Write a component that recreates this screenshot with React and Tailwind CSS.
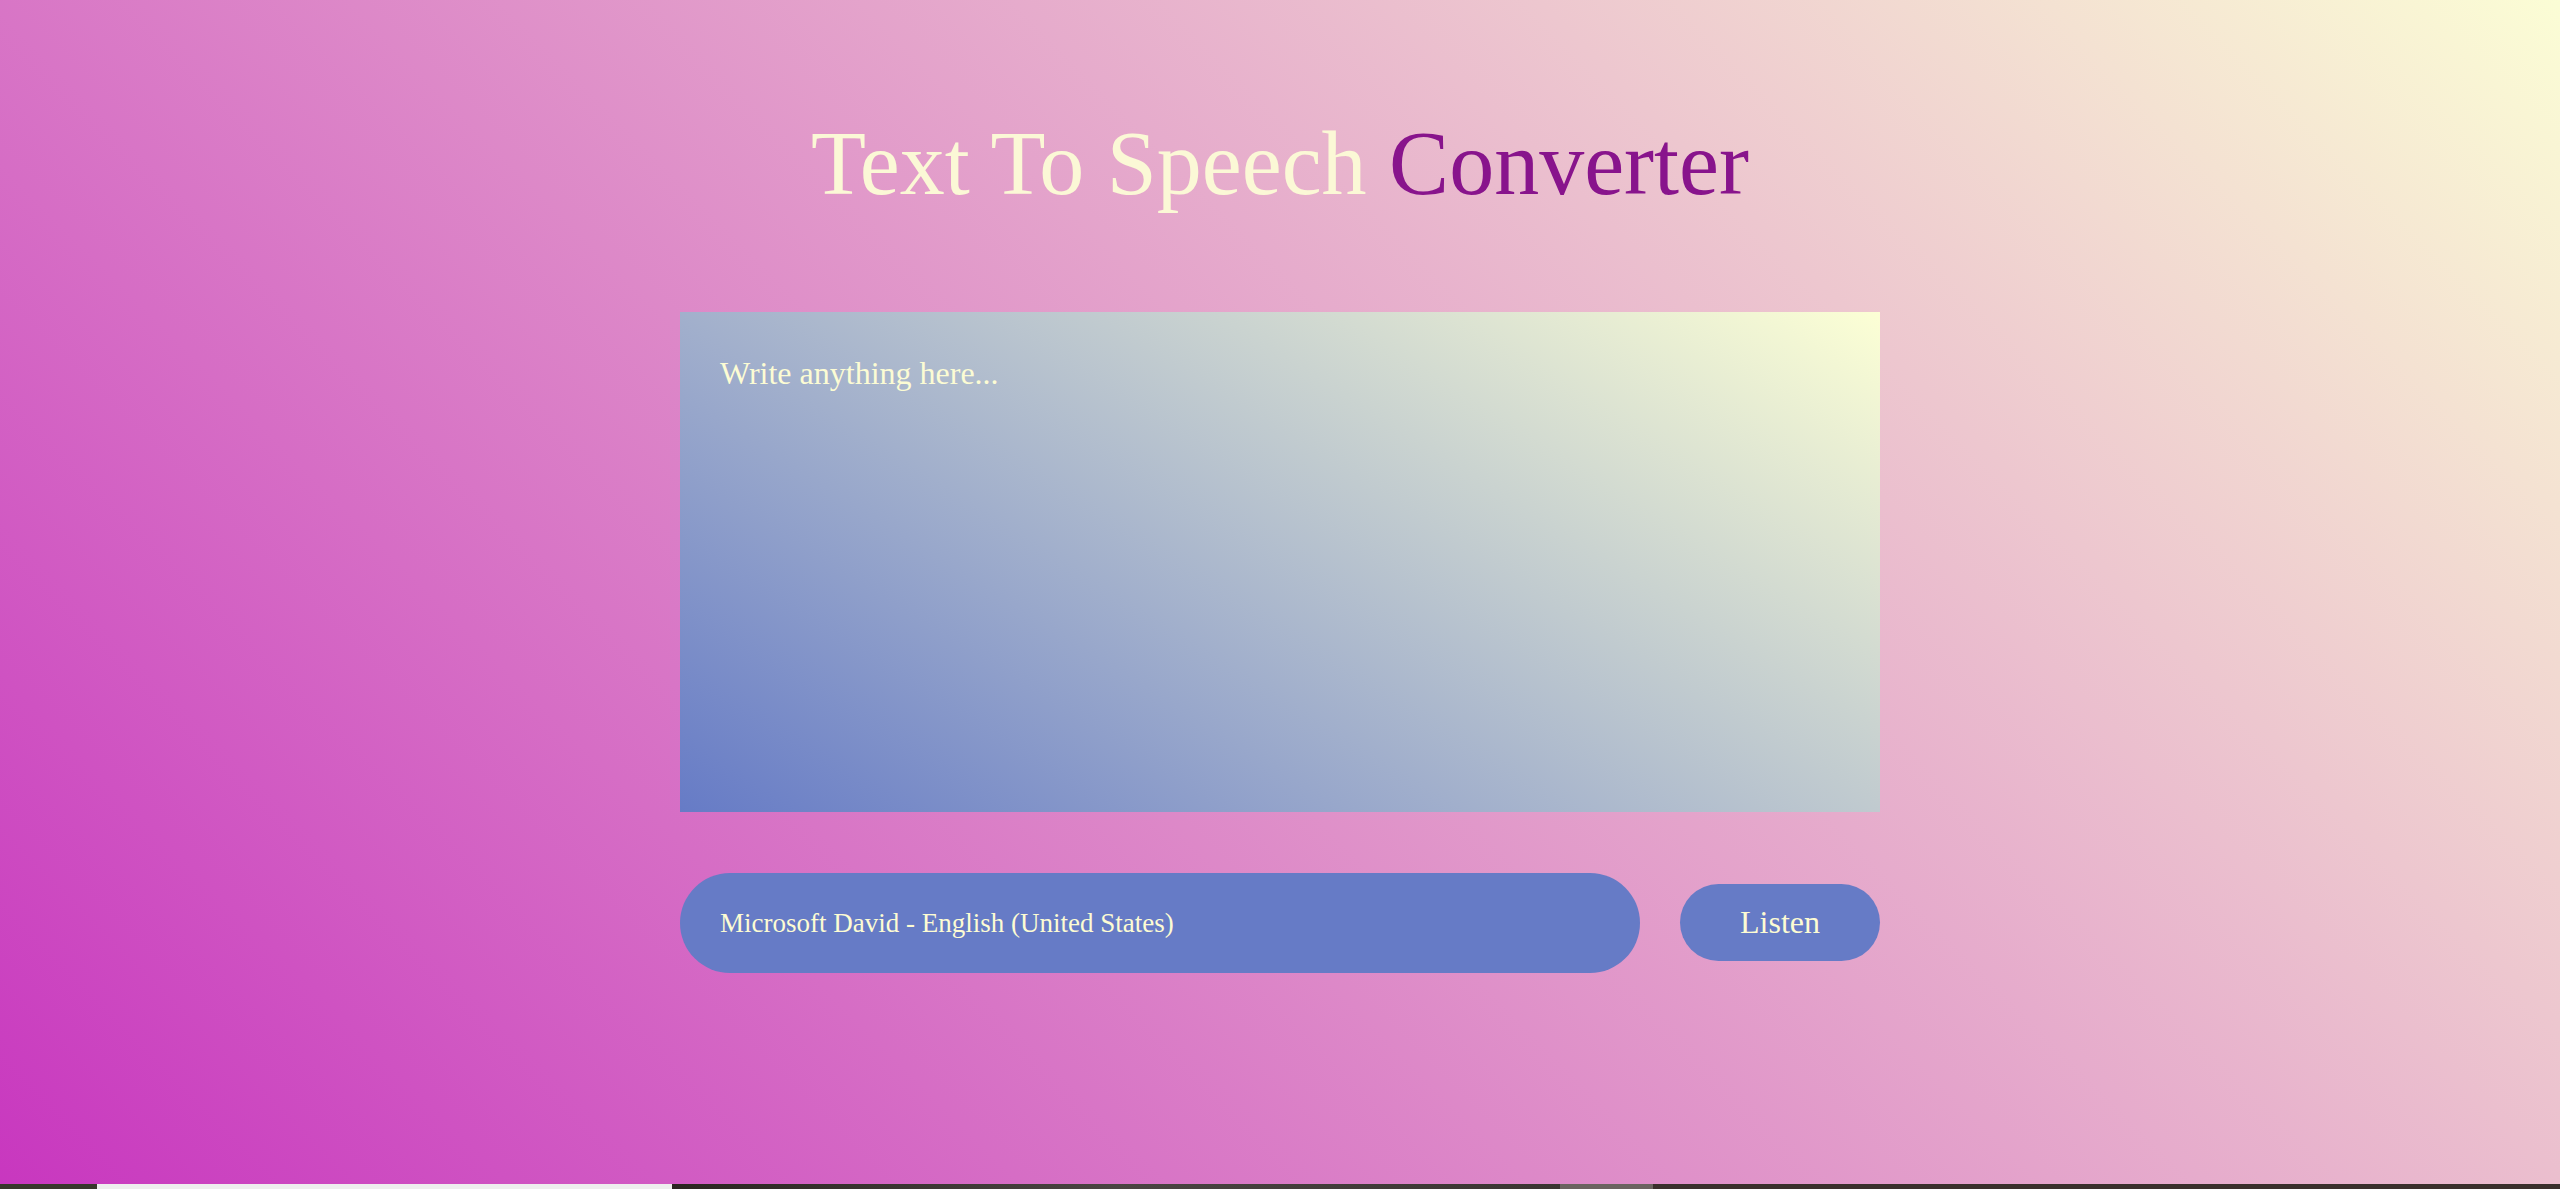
import React, { useState } from "react";

const voices = ["Microsoft David - English (United States)"];

const App = () => {
  const [text, setText] = useState("");
  const [voice, setVoice] = useState(voices[0]);

  return (
    <div className="min-h-[1189px] flex flex-col font-['Liberation_Serif',serif]">
      <div className="flex-1 flex flex-col items-center bg-[linear-gradient(45deg,#c837bf,#fbfdd5)]">
        {/* Heading */}
        <h1 className="mt-[114px] text-[90px] leading-[1.107] text-[#fbf8d6]">
          Text To Speech <span className="text-[#88148c]">Converter</span>
        </h1>

        {/* Text input */}
        <textarea
          value={text}
          onChange={(e) => setText(e.target.value)}
          placeholder="Write anything here..."
          className="mt-[98px] w-[1200px] h-[500px] px-10 pt-[43px] pb-10 resize-none outline-none border-0 text-[32px] leading-[1.15] text-[#fcfcd4] placeholder-[#fcfcd4] bg-[linear-gradient(32deg,#667bc6,#fcffd5)]"
        />

        {/* Controls */}
        <div className="mt-[61px] w-[1200px] flex items-center gap-10">
          <select
            value={voice}
            onChange={(e) => setVoice(e.target.value)}
            className="w-[960px] h-[100px] px-10 pt-[2px] rounded-full appearance-none outline-none border-0 bg-[#667bc6] text-[27px] text-[#fdfcd3]"
          >
            {voices.map((v) => (
              <option key={v}>{v}</option>
            ))}
          </select>
          <button className="w-[200px] py-5 rounded-full bg-[#667bc6] text-[32px] leading-[1.15] text-[#fdfcd3]">
            Listen
          </button>
        </div>
      </div>

      {/* bottom strip */}
      <div className="h-[5px] flex">
        <div className="w-[97px] bg-[#37372b]" />
        <div className="w-[575px] bg-[#eeeeee]" />
        <div className="w-[888px] bg-[linear-gradient(to_right,#2a2520,#4a4442,#3a3431)]" />
        <div className="w-[93px] bg-[#6b6360]" />
        <div className="flex-1 bg-[#3a2f2c]" />
      </div>
    </div>
  );
};

export default App;
